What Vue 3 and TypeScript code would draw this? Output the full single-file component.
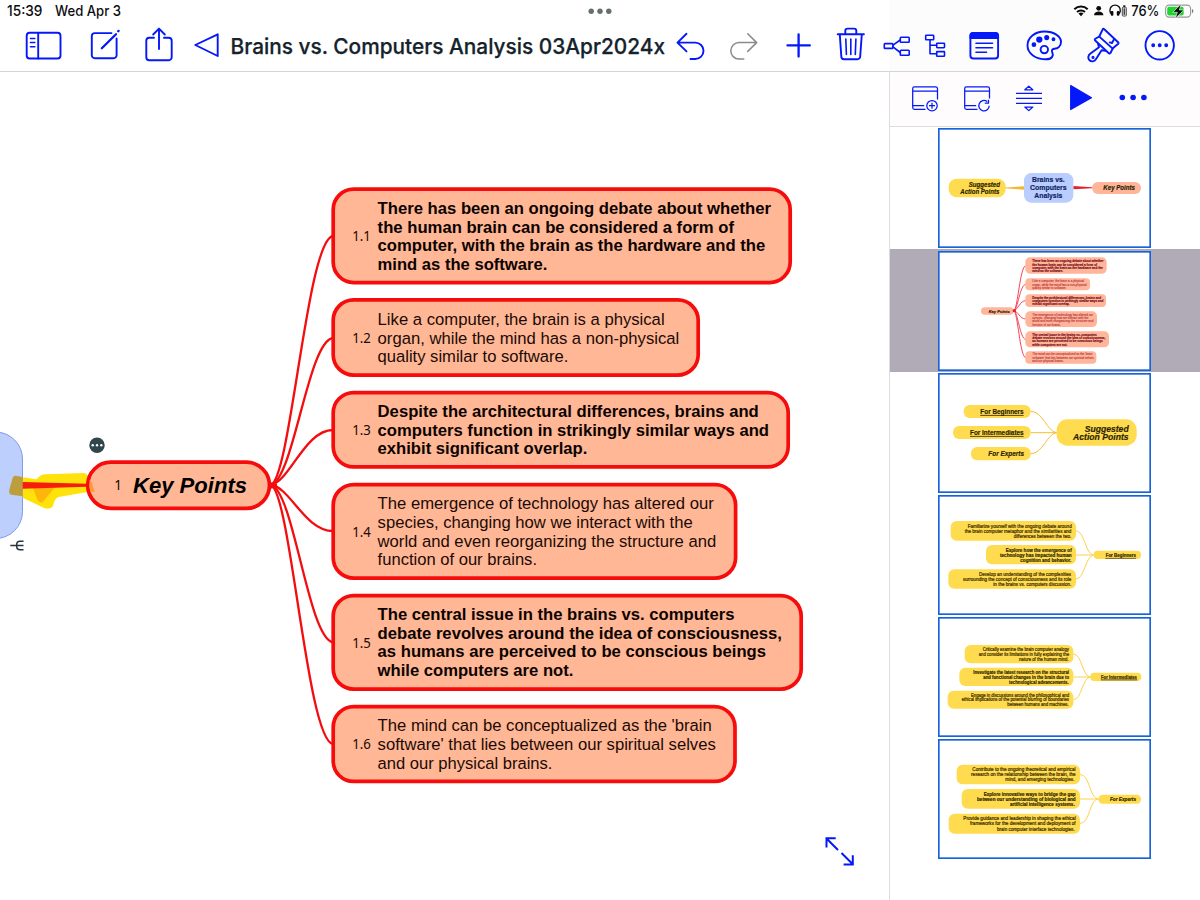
<script setup lang="ts">
interface Line { t: string; x: number; y: number; w: number }
interface Topic {
  id: string; top: number; bottom: number; right: number; bold: boolean
  labelY: number; lines: Line[]; path: string
}

const topic = (
  id: string, top: number, bottom: number, right: number, bold: boolean,
  labelY: number, path: string, rows: [string, number, number][],
): Topic => ({
  id, top, bottom, right, bold, labelY, path,
  lines: rows.map(([t, y, end]) => ({ t, x: 377.6, y, w: end - 377.6 })),
})

const topics: Topic[] = [
  topic('1.1', 187.3, 284.4, 792, true, 241.3, 'M271 485C291 476 307 240 333 236', [
    ['There has been an ongoing debate about whether', 214, 771],
    ['the human brain can be considered a form of', 232.5, 734],
    ['computer, with the brain as the hardware and the', 251.2, 765.3],
    ['mind as the software.', 269.7, 547.3],
  ]),
  topic('1.2', 298, 377, 700, false, 342.7, 'M271 485C294 478 308 341 333 338', [
    ['Like a computer, the brain is a physical', 324.7, 664.6],
    ['organ, while the mind has a non-physical', 343.6, 679.2],
    ['quality similar to software.', 362, 568.3],
  ]),
  topic('1.3', 390.7, 468.8, 790, true, 434.7, 'M271 485C290 481 305 430 333 430', [
    ['Despite the architectural differences, brains and', 417, 758.8],
    ['computers function in strikingly similar ways and', 435.6, 769],
    ['exhibit significant overlap.', 454.1, 587.3],
  ]),
  topic('1.4', 482.8, 580, 737.4, false, 536.6, 'M271 485C290 487 305 531 333 531', [
    ['The emergence of technology has altered our', 509.3, 713.8],
    ['species, changing how we interact with the', 528, 692.7],
    ['world and even reorganizing the structure and', 546.6, 716.2],
    ['function of our brains.', 565.2, 537],
  ]),
  topic('1.5', 593.8, 691, 803, true, 647.6, 'M271 485C294 491 308 638 333 642.5', [
    ['The central issue in the brains vs. computers', 620.3, 734.4],
    ['debate revolves around the idea of consciousness,', 639, 782],
    ['as humans are perceived to be conscious beings', 657.4, 766],
    ['while computers are not.', 676, 573.4],
  ]),
  topic('1.6', 704.8, 783.3, 736.8, false, 749.2, 'M271 485C291 494 307 740 333 744', [
    ["The mind can be conceptualized as the 'brain", 731.3, 711.8],
    ["software' that lies between our spiritual selves", 750, 715.8],
    ['and our physical brains.', 768.6, 552.4],
  ]),
]

type Kind = 'n' | 'b' | 'i' | 'u'
interface Slide {
  box: string; frame: [number, number]; selected?: boolean; line: string
  pills: [number, number, number, number, number, string][]
  texts: [string, number, number, number, number, Kind][]
  paths: string[]
}
const Y = '#ffdb4f'
const R = '#ffb59a'

const slides: Slide[] = [
  {
    box: '144 25 639 360', frame: [144, 25], line: '#f4c33c',
    pills: [[176, 177, 171, 56, 24, Y], [402, 160, 148, 89, 22, '#b9cdff'], [606, 187, 147, 36, 18, R]],
    texts: [
      ['Suggested', 236, 202, 94, 19, 'i'], ['Action Points', 211, 222, 117, 19, 'i'],
      ['Brains vs.', 426, 187, 98, 22, 'b'], ['Computers', 420, 211, 110, 22, 'b'], ['Analysis', 433, 235, 84, 22, 'b'],
      ['Key Points', 640, 212, 95, 19, 'i'],
    ],
    paths: [],
  },
  {
    box: '24 8 639 360', frame: [24, 8], selected: true, line: '#f4455a',
    pills: [
      [153, 177, 98, 22, 11, R], [286, 27, 244, 49, 14, R], [286, 90, 194, 36, 12, R], [286, 138, 242, 38, 12, R],
      [286, 189, 215, 47, 14, R], [286, 249, 251, 48, 14, R], [286, 309, 213, 37, 12, R],
    ],
    texts: [
      ['Key Points', 176, 193, 63, 13, 'i'],
      ...([
        [0, [[42, 213], [52, 194], [62, 211], [72, 92]]],
        [1, [[102, 155], [112, 163], [121, 102]]],
        [2, [[151, 206], [161, 213], [171, 112]]],
        [3, [[202, 182], [212, 168], [222, 183], [232, 85]]],
        [4, [[262, 193], [272, 219], [282, 211], [292, 105]]],
        [5, [[321, 180], [331, 184], [341, 94]]],
      ] as [number, [number, number][]][]).flatMap(([k, rows]) =>
        rows.map(([y, w], n) => [topics[k].lines[n].t, 307, y, w, 9.8, topics[k].bold ? 'b' : 'n'] as [string, number, number, number, number, Kind])),
    ],
    paths: [
      'M252 187C263 182 270 55 287 52', 'M252 187C263 184 270 109 287 108', 'M252 187C263 185 270 157 287 157',
      'M252 187C263 188 270 212 287 212', 'M252 187C263 190 270 272 287 273', 'M252 187C263 192 270 326 287 328',
    ],
  },
  {
    box: '24 9 639 360', frame: [24, 9], line: '#f7bd38',
    pills: [[101, 105, 201, 39, 18, Y], [69, 168, 233, 39, 18, Y], [123, 231, 179, 40, 18, Y], [380, 148, 240, 79, 32, Y]],
    texts: [
      ['For Beginners', 151, 132, 130, 19, 'u'], ['For Intermediates', 120, 195, 161, 19, 'u'], ['For Experts', 175, 257, 107, 19, 'i'],
      ['Suggested', 464, 185, 132, 25, 'i'], ['Action Points', 429, 211, 167, 25, 'i'],
    ],
    paths: ['M380 188C350 185 340 124 302 124', 'M380 188H302', 'M380 188C350 191 340 251 302 251'],
  },
  {
    box: '24 3 639 360', frame: [24, 3], line: '#fbd24b',
    pills: [[62, 81, 376, 59, 18, Y], [168, 153, 270, 58, 18, Y], [55, 226, 383, 58, 18, Y], [491, 170, 142, 25, 12, Y]],
    texts: [
      ['Familiarize yourself with the ongoing debate around', 113, 103, 312, 14.5, 'n'],
      ['the brain computer metaphor and the similarities and', 104, 117, 320, 14.5, 'n'],
      ['differences between the two.', 251, 132, 173, 14.5, 'n'],
      ['Explore how the emergence of', 227, 173, 198, 14.5, 'b'],
      ['technology has impacted human', 210, 189, 215, 14.5, 'b'],
      ['cognition and behavior.', 271, 204, 153, 14.5, 'b'],
      ['Develop an understanding of the complexities', 147, 246, 276, 14.5, 'n'],
      ['surrounding the concept of consciousness and its role', 99, 261, 325, 14.5, 'n'],
      ['in the brains vs. computers discussion.', 190, 276, 234, 14.5, 'n'],
      ['For Beginners', 527, 189, 91, 13.5, 'u'],
    ],
    paths: ['M491 183C466 181 464 111 438 111', 'M491 183H438', 'M491 183C466 185 464 255 438 255'],
  },
  {
    box: '24 4 639 360', frame: [24, 4], line: '#fbd24b',
    pills: [[104, 88, 326, 55, 18, Y], [88, 156, 342, 55, 18, Y], [53, 225, 377, 54, 18, Y], [481, 171, 153, 25, 12, Y]],
    texts: [
      ['Critically examine the brain computer analogy', 158, 107, 259, 13.8, 'n'],
      ['and consider its limitations in fully explaining the', 146, 121, 271, 13.8, 'n'],
      ['nature of the human mind.', 267, 136, 149, 13.8, 'n'],
      ['Investigate the latest research on the structural', 130, 175, 287, 13.8, 'b'],
      ['and functional changes in the brain due to', 160, 190, 257, 13.8, 'b'],
      ['technological advancements.', 237, 204, 179, 13.8, 'b'],
      ['Engage in discussions around the philosophical and', 123, 244, 294, 13.8, 'n'],
      ['ethical implications of the potential blurring of boundaries', 95, 257, 322, 13.8, 'n'],
      ['between humans and machines.', 232, 271, 184, 13.8, 'n'],
      ['For Intermediates', 513, 189, 108, 13.5, 'u'],
    ],
    paths: ['M481 184C456 181 456 115 430 115', 'M481 184H430', 'M481 184C456 186 456 252 430 252'],
  },
  {
    box: '24 4 639 360', frame: [24, 4], line: '#fbd24b',
    pills: [[80, 81, 370, 59, 18, Y], [95, 154, 355, 59, 18, Y], [56, 228, 394, 60, 18, Y], [505, 171, 128, 27, 13, Y]],
    texts: [
      ['Contribute to the ongoing theoretical and empirical', 127, 101, 310, 14.5, 'n'],
      ['research on the relationship between the brain, the', 123, 116, 314, 14.5, 'n'],
      ['mind, and emerging technologies.', 226, 131, 207, 14.5, 'n'],
      ['Explore innovative ways to bridge the gap', 161, 174, 276, 14.5, 'b'],
      ['between our understanding of biological and', 141, 190, 296, 14.5, 'b'],
      ['artificial intelligence systems.', 240, 205, 194, 14.5, 'b'],
      ['Provide guidance and leadership in shaping the ethical', 100, 248, 337, 14.5, 'n'],
      ['frameworks for the development and deployment of', 120, 263, 317, 14.5, 'n'],
      ['brain computer interface technologies.', 201, 279, 233, 14.5, 'n'],
      ['For Experts', 540, 190, 78, 14, 'i'],
    ],
    paths: ['M505 184C478 181 480 111 450 111', 'M505 184H450', 'M505 184C478 186 480 257 450 257'],
  },
]
</script>

<template>
  <div class="app">
    <header>
      <div class="status">
        <svg class="clock" viewBox="0 0 570 22">
          <text x="7" y="16" textLength="35.5" lengthAdjust="spacingAndGlyphs">15:39</text>
          <text x="55" y="16" textLength="66" lengthAdjust="spacingAndGlyphs">Wed Apr 3</text>
        </svg>
        <svg class="grab" viewBox="570 0 60 22">
          <circle cx="591.2" cy="11.2" r="2.7" /><circle cx="600" cy="11.2" r="2.7" /><circle cx="608.8" cy="11.2" r="2.7" />
        </svg>
        <svg class="signals" viewBox="1060 0 140 22">
          <g class="thick">
            <path d="M1074.3 9.2a9.6 9.6 0 0 1 13.4 0" /><path d="M1077 12a5.8 5.8 0 0 1 8 0" />
          </g>
          <path d="M1081 16.3l-2.5-2.7a3.6 3.6 0 0 1 5 0z" />
          <circle cx="1098.7" cy="8.3" r="2.4" /><path d="M1094 15.3c0-5 9.4-5 9.4 0z" />
          <g class="thin"><path d="M1112 14.5a5.2 5.2 0 1 1 6.2 0" /></g>
          <rect x="1110.8" y="11" width="2.6" height="4.8" rx="1" /><rect x="1116.8" y="11" width="2.6" height="4.8" rx="1" />
          <rect x="1122.3" y="7.2" width="4" height="8.8" rx=".8" class="cell" /><rect x="1123.3" y="5.3" width="2" height="1.6" />
          <rect x="1123.5" y="8.3" width="1.700" height="6.6" fill="#444" />
          <text x="1131.2" y="16" textLength="28.2" lengthAdjust="spacingAndGlyphs">76%</text>
          <rect x="1165.6" y="5.1" width="25" height="12" rx="3.6" fill="none" stroke="#96969a" stroke-width="1.1" />
          <rect x="1167.2" y="6.7" width="16.5" height="8.8" rx="2" fill="#1fd531" />
          <path d="M1192 9v4.2c1.8-.6 1.8-3.6 0-4.2z" fill="#77777b" />
          <path d="M1181.300 3.800l-8.500 8.500h4.600l-2.200 6.300 8.700-8.600h-4.600z" stroke="#fff" stroke-width=".6" />
        </svg>
      </div>
      <nav class="tools">
        <svg viewBox="0 22 75 49">
          <rect x="26.7" y="32.7" width="33.8" height="25.8" rx="3" /><path d="M38.200 33v25.500" /><path class="t" d="M30.500 38.500h4.300M30.500 42.500h4.300M30.500 46.700h4.300" />
        </svg>
        <svg viewBox="75 22 55 49">
          <path d="M111.500 33.100H94.800a3 3 0 0 0-3 3V55.300a3 3 0 0 0 3 3h18.800a3 3 0 0 0 3-3V38.500" /><path class="w" d="M101.800 48.200L116 34.200" /><path class="w" d="M118.200 31.300l.4-.4" />
        </svg>
        <svg viewBox="130 22 52 49">
          <path d="M154 37.700h-4.700a3 3 0 0 0-3 3v16.600a3 3 0 0 0 3 3h19.400a3 3 0 0 0 3-3V40.700a3 3 0 0 0-3-3H164" /><path d="M159 49V28.800M153.200 34.500L159 28.600l5.800 5.900" />
        </svg>
        <svg viewBox="182 22 44 49"><path d="M217.700 34.300L195.300 45l22.400 11z" /></svg>
        <svg viewBox="226 22 442 49" class="title">
          <text x="230.500" y="54.200" textLength="434.500" lengthAdjust="spacingAndGlyphs">Brains vs. Computers Analysis 03Apr2024x</text>
        </svg>
        <svg viewBox="668 22 48 49"><path d="M686.500 33.800l-9 8.800 9 8.800M678 42.600h17.300a8.200 8.200 0 0 1 0 16.400H690.500" /></svg>
        <svg viewBox="716 22 56 49" class="off"><path d="M747.700 33.800l9 8.800-9 8.800M756.300 42.600h-17.300a8.200 8.200 0 0 0 0 16.400H743.800" /></svg>
        <svg viewBox="772 22 50 49"><path class="w" d="M787.500 45.400h22.300M798.600 34.300v22.300" /></svg>
        <svg viewBox="822 22 52 49">
          <path d="M837.700 34.200h26.200M845.300 34v-3.200a2.200 2.200 0 0 1 2.200-2.200h6.600a2.200 2.200 0 0 1 2.200 2.200V34M839.800 34.500l1.500 22a2.700 2.700 0 0 0 2.700 2.700h13.500a2.700 2.700 0 0 0 2.700-2.700l1.600-22" /><path class="t" d="M845.800 39l.6 15.500M850.800 39v15.500M855.900 39l-.6 15.500" />
        </svg>
        <svg viewBox="874 22 43 49">
          <g class="t"><rect x="884.300" y="43.600" width="8.600" height="4.800" rx=".7" /><rect x="900.300" y="37.200" width="8.900" height="5" rx=".7" /><rect x="900.300" y="50.300" width="8.900" height="5" rx=".7" /><path d="M893 45.200l7.200-5.200M893 46.800l7.200 5.700" /></g>
        </svg>
        <svg viewBox="917 22 38 49">
          <g class="t"><rect x="925.700" y="35.300" width="8" height="4.500" rx=".6" /><rect x="936.700" y="43.200" width="7.800" height="4.500" rx=".6" /><rect x="936.700" y="51.600" width="7.800" height="4.700" rx=".6" /><path d="M930 40v13.800h6.500M930 45.300h6.500" /></g>
        </svg>
        <svg viewBox="955 22 58 49">
          <rect x="970.400" y="33" width="27.700" height="25.500" rx="3" /><path class="f" d="M970.400 38v-2a3 3 0 0 1 3-3h21.700a3 3 0 0 1 3 3v2z" /><path class="t" d="M976 43.200h16.500M976 47.700h16.500M976 52.200h10.500" />
        </svg>
        <svg viewBox="1013 22 60 49">
          <path d="M1044.500 31.500c9.500 0 16.500 4.800 16.500 10.500 0 4.500-3.500 6.500-6.500 6.800-2.500.4-3.200 1.800-2.200 3.700 1.300 2.600.4 6.800-6.300 6.800-10.200 0-18.500-5.800-18.500-13.800s7.500-14 17-14z" />
          <circle cx="1044.300" cy="49.600" r="3.700" /><g class="f"><circle cx="1033.900" cy="44.700" r="1.400" /><circle cx="1039.300" cy="39.600" r="2.200" /><circle cx="1046.700" cy="37.600" r="1.600" /><circle cx="1053.500" cy="39.200" r="1" /></g>
        </svg>
        <svg viewBox="1073 22 58 49">
          <path d="M1104 29q-.8-.5-1.300.3l-3.400 7.200-4 2.300q-1 .8-.1 1.700l13.600 12.700q1 .7 1.700-.2l2.300-4.700 5.200-4.300q1-.9.100-1.800z" /><path d="M1099.300 36.600l13.400 12M1114.200 39l-2.200 4-2.200-.6" /><path d="M1098 43.700l1 3.500-8.500 6.300c-2.800 2-2.700 5-1 6.800 1.800 1.700 4.800 1.400 6.400-1.100l5.700-8.900 3.600.5" /><circle class="f" cx="1093" cy="57.400" r=".6" />
        </svg>
        <svg viewBox="1131 22 69 49">
          <circle cx="1159.700" cy="45.300" r="14.200" /><g class="f"><circle cx="1153.200" cy="45.300" r="1" /><circle cx="1159.700" cy="45.300" r="1" /><circle cx="1166.200" cy="45.300" r="1" /></g>
        </svg>
      </nav>
    </header>

    <main>
      <svg class="canvas" viewBox="0 72 889 828">
        <rect x="-70" y="432" width="92.500" height="106.500" rx="27" fill="#bccffd" stroke="#8497ec" />
        <g transform="translate(0 420) scale(.3333)">
          <path d="M68 172L110 178C118 168 125 163 140 163L250 159C262 160 270 172 274 187L284 216 258 217 180 230C168 232 164 240 160 254C157 266 145 267 134 265L68 233Z" fill="#ffe20a" />
          <path d="M98 202H165L128 247C120 250 114 244 111 236Z" fill="#ffb60a" />
          <path d="M46 167L68 171V229L34 224C28 222 26 216 28 209L38 173Q41 167 46 167Z" fill="#bd9e3c" />
          <path d="M68 186L260 191V200L68 206Z" fill="#f61d0c" />
        </g>
        <g class="wires">
          <path v-for="t in topics" :key="t.id" :d="t.path" />
        </g>
        <path d="M268 481.500l9 2.200v3.600l-9 2.200z" fill="#f40d0f" />
        <g class="nodes">
          <rect x="87.700" y="462.200" width="181.800" height="46.200" rx="23.100" />
          <rect v-for="t in topics" :key="t.id" x="333.200" :y="t.top + 1.850" :width="t.right - 335" :height="t.bottom - t.top - 3.700" rx="20.500" />
        </g>
        <path d="M89.700 480L91.500 482 94.800 492H90.300Q88.800 486 89.700 480Z" fill="#ff9c38" />
        <text x="114.200" y="490" class="one">1</text>
        <text x="133" y="492.700" class="key" textLength="114" lengthAdjust="spacingAndGlyphs">Key Points</text>
        <g v-for="t in topics" :key="t.id">
          <text x="352.200" :y="t.labelY" class="num" textLength="18.600" lengthAdjust="spacingAndGlyphs">{{ t.id }}</text>
          <text v-for="l in t.lines" :key="l.t" :x="l.x" :y="l.y" class="body" :class="{ bold: t.bold }" :textLength="l.w" lengthAdjust="spacingAndGlyphs">{{ l.t }}</text>
        </g>
        <circle cx="97" cy="445.200" r="7.700" fill="#30464c" />
        <g fill="#fff"><circle cx="92.700" cy="445.200" r="1.200" /><circle cx="97" cy="445.200" r="1.200" /><circle cx="101.300" cy="445.200" r="1.200" /></g>
        <path d="M10.300 545.500H23.500M23.500 541.300H20Q16.700 541.300 16.700 544.500V546.500Q16.700 549.700 20 549.700H23.500" fill="none" stroke="#26363d" stroke-width="1.500" />
        <path class="expand" d="M838 850L826.500 838.500M826.500 847.500V838.300H835.700M841.500 853L852.800 864.300M852.800 855.300V864.500H843.600" />
      </svg>

      <aside>
        <div class="paneltools">
          <svg viewBox="890 72 310 54">
            <g class="line">
              <path d="M925.500 109.400h-11a1.800 1.800 0 0 1-1.800-1.800V88.700a1.800 1.800 0 0 1 1.800-1.800h21.200a1.800 1.800 0 0 1 1.800 1.800V99.500M912.700 91.200h24.800M912.700 105.500h11.500" />
              <circle cx="932" cy="105.700" r="5.200" /><path d="M929 105.700h6M932 102.700v6" />
              <path d="M977.500 109.400h-11a1.800 1.800 0 0 1-1.800-1.800V88.700a1.800 1.800 0 0 1 1.800-1.800h21.200a1.800 1.800 0 0 1 1.800 1.800V98.500M964.700 91.200h24.800M964.700 105.500h11.500" />
              <path d="M989.200 105.700a5.200 5.200 0 1 1-2-4.100M988.500 99.800v3.400h-3.700" />
              <path d="M1016 93.300h26M1016 98.300h26M1016 103.400h26M1024.800 89.800l4-3.600 4 3.600zM1024.800 107l4 3.600 4-3.600z" />
            </g>
            <path d="M1070.700 85.600L1091.500 97.700 1070.700 109.500z" fill="#0418f8" stroke="#0418f8" stroke-width="1.200" stroke-linejoin="round" />
            <g fill="#0418f8"><circle cx="1122.300" cy="97.500" r="2.800" /><circle cx="1133.100" cy="97.500" r="2.800" /><circle cx="1143.900" cy="97.500" r="2.800" /></g>
          </svg>
        </div>
        <div class="slides">
          <div v-for="(s, i) in slides" :key="i" class="slide" :class="{ selected: s.selected }">
            <svg :viewBox="s.box">
              <rect :x="s.frame[0] + 2.500" :y="s.frame[1] + 2.500" width="634" height="355" fill="#fff" stroke="#1763db" stroke-width="5" />
              <template v-if="i === 0">
                <path d="M346 203.500L402 200V210L346 206Z" fill="#f3b62c" /><path d="M550 199L606 203V206L550 209Z" fill="#e3202c" />
              </template>
              <path v-for="p in s.paths" :key="p" :d="p" fill="none" :stroke="s.line" stroke-width="3" />
              <rect v-for="(p, k) in s.pills" :key="k" :x="p[0]" :y="p[1]" :width="p[2]" :height="p[3]" :rx="p[4]" :fill="p[5]" />
              <circle v-if="i === 1" cx="253" cy="187" r="5" fill="#ee1530" />
              <text v-for="t in s.texts" :key="t[0]" :x="t[1]" :y="t[2]" :textLength="t[3]" :font-size="t[4]" :class="[t[5], 'mini' + (i + 1)]" lengthAdjust="spacingAndGlyphs">{{ t[0] }}</text>
            </svg>
          </div>
        </div>
      </aside>
    </main>
  </div>
</template>

<style>
body { margin: 0; background: #fff; }
</style>

<style scoped>
.app { width: 1200px; height: 900px; overflow: hidden; display: flex; flex-direction: column; background: #fff; font-family: "Liberation Sans", Arial, sans-serif; }
svg { display: block; }
header { height: 71px; flex: none; border-bottom: 1px solid #d5d5d7; background: linear-gradient(90deg, #fff 889px, #fcfcfd 889px); }
.status { height: 22px; display: flex; }
.status svg { height: 22px; }
.status text { font: 500 14.600px Inter, "Noto Sans", sans-serif; fill: #0c0c0e; }
.clock { width: 570px; }
.grab { width: 60px; fill: #64706f; }
.signals { width: 140px; margin-left: auto; fill: #0b0b0d; }
.signals .thick { fill: none; stroke: #0b0b0d; stroke-width: 2; }
.signals .thin { fill: none; stroke: #0b0b0d; stroke-width: 1.400; }
.signals .cell { fill: #fff; stroke: #333; stroke-width: .9; }
.tools { height: 49px; display: grid; grid-template-columns: 75px 55px 52px 44px 442px 48px 56px 50px 52px 43px 38px 58px 60px 58px 69px; }
.tools svg { width: 100%; height: 49px; fill: none; stroke: #0418f8; stroke-width: 1.900; stroke-linecap: round; stroke-linejoin: round; }
.tools .t { stroke-width: 1.600; }
.tools .w { stroke-width: 2.300; }
.tools .f { fill: #0418f8; }
.tools .off { stroke: #8a8a8a; stroke-width: 1.500; }
.tools .title { stroke: #14232c; stroke-width: .25; fill: #14232c; font: 500 21.300px Inter, "Noto Sans", sans-serif; }
main { flex: 1; display: flex; }
.canvas { width: 889px; height: 828px; }
.wires { fill: none; stroke: #f40d0f; stroke-width: 2.300; }
.nodes { fill: #ffb795; stroke: #f60c0c; stroke-width: 3.700; }
.one { font: 13.500px "Noto Sans", sans-serif; fill: #170904; }
.key { font-size: 22.500px; font-weight: bold; font-style: italic; }
.num { font: 13.500px "Noto Sans", sans-serif; fill: #1c0a05; }
.body { font-size: 16.300px; fill: #1c0a05; }
.bold { font-weight: bold; fill: #0c0301; }
.expand { fill: none; stroke: #0418f8; stroke-width: 2; }
aside { width: 310px; border-left: 1px solid #dcdcde; background: #fff; }
.paneltools { height: 54px; background: #fefcfd; border-bottom: 1px solid #dedcde; }
.paneltools svg { width: 310px; height: 54px; }
.line { fill: none; stroke: #0418f8; stroke-width: 1.250; stroke-linejoin: round; }
.slides { display: flex; flex-direction: column; padding-top: .3px; }
.slide { height: 122.200px; display: flex; align-items: center; padding-left: 48px; }
.slide svg { width: 213px; height: 120px; }
.selected { background: #b0abb6; }
.slide text { fill: #2b1f00; stroke: #2b1f00; stroke-width: .5; }
.slide .n { fill: #3c2c00; stroke: #3c2c00; stroke-width: .6; }
.slide .b { font-weight: bold; }
.slide .u { font-weight: bold; text-decoration: underline; }
.slide .i { font-weight: bold; font-style: italic; }
.slide .mini1.b { fill: #0f1f66; stroke: #0f1f66; }
.slide .mini2.n { fill: #b8303a; stroke: #b8303a; stroke-width: .3; }
.slide .mini2.b { fill: #7c1018; stroke: #7c1018; }
</style>
